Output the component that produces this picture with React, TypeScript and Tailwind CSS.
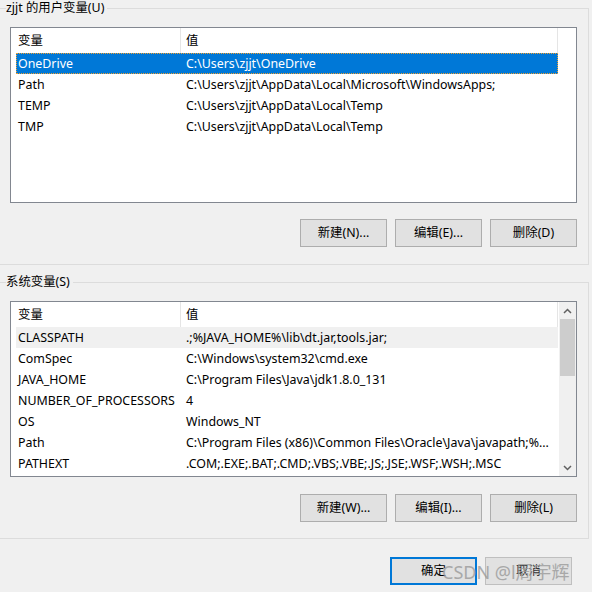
import React from "react";

const FONT = { fontFamily: '"Noto Sans", "Noto Sans CJK SC", sans-serif' };

type Row = [string, string];

const userVars: Row[] = [
  ["OneDrive", "C:\\Users\\zjjt\\OneDrive"],
  ["Path", "C:\\Users\\zjjt\\AppData\\Local\\Microsoft\\WindowsApps;"],
  ["TEMP", "C:\\Users\\zjjt\\AppData\\Local\\Temp"],
  ["TMP", "C:\\Users\\zjjt\\AppData\\Local\\Temp"],
];

const sysVars: Row[] = [
  ["CLASSPATH", ".;%JAVA_HOME%\\lib\\dt.jar,tools.jar;"],
  ["ComSpec", "C:\\Windows\\system32\\cmd.exe"],
  ["JAVA_HOME", "C:\\Program Files\\Java\\jdk1.8.0_131"],
  ["NUMBER_OF_PROCESSORS", "4"],
  ["OS", "Windows_NT"],
  ["Path", "C:\\Program Files (x86)\\Common Files\\Oracle\\Java\\javapath;%..."],
  ["PATHEXT", ".COM;.EXE;.BAT;.CMD;.VBS;.VBE;.JS;.JSE;.WSF;.WSH;.MSC"],
];

function ListView({
  rows,
  selected,
  hover,
  scroll,
}: {
  rows: Row[];
  selected?: number;
  hover?: number;
  scroll?: boolean;
}) {
  return (
    <div className="ml-[10px] w-[567px] h-[176px] border border-[#828790] bg-white flex overflow-hidden">
      <div className="w-[547px] flex flex-col">
        <div className="h-[25px] flex items-stretch shrink-0">
          <div className="w-[169px] pl-[7px] pt-[2px] flex items-center text-[12.4px] leading-none">变量</div>
          <div className="w-px bg-[#e5e5e5]" />
          <div className="flex-1 pl-[5px] pt-[2px] flex items-center text-[12.4px] leading-none border-r border-[#e5e5e5]">值</div>
        </div>
        {rows.map((r, i) => {
          const sel = i === selected;
          const hov = i === hover;
          return (
            <div
              key={i}
              className={
                "ml-[5px] w-[542px] h-[21px] pt-[2px] flex items-center text-[12.4px] leading-none whitespace-nowrap " +
                (sel
                  ? "bg-[#0078d7] text-white outline outline-1 outline-dotted outline-[#f0a030] -outline-offset-1"
                  : hov
                  ? "bg-[#f0f0f0] text-black"
                  : "text-black")
              }
            >
              <div className="w-[170px] pl-[2px]">{r[0]}</div>
              <div className="flex-1">{r[1]}</div>
            </div>
          );
        })}
      </div>
      <div className="flex-1" />
      {scroll && (
        <div className="w-[17px] bg-[#f0f0f0] flex flex-col items-center">
          <div className="h-[17px] w-full flex items-center justify-center">
            <svg width="9" height="6" viewBox="0 0 9 6">
              <path d="M1 5 L4.5 1.5 L8 5" stroke="#606060" strokeWidth="1.5" fill="none" />
            </svg>
          </div>
          <div className="w-[15px] h-[57px] bg-[#cdcdcd]" />
          <div className="flex-1" />
          <div className="h-[17px] w-full flex items-center justify-center">
            <svg width="9" height="6" viewBox="0 0 9 6">
              <path d="M1 1 L4.5 4.5 L8 1" stroke="#606060" strokeWidth="1.5" fill="none" />
            </svg>
          </div>
        </div>
      )}
    </div>
  );
}

function Btn({ label, focus, dim }: { label: string; focus?: boolean; dim?: boolean }) {
  return (
    <div
      className={
        "w-[87px] h-[28px] pt-[1px] flex items-center justify-center text-[12.4px] leading-none bg-[#e1e1e1] " +
        (focus
          ? "border-2 border-[#0078d7]"
          : dim
          ? "border border-[#bfbfbf] text-[#333]"
          : "border border-[#adadad]")
      }
    >
      {label}
    </div>
  );
}

function Group({
  title,
  children,
}: {
  title: string;
  children: React.ReactNode;
}) {
  return (
    <div className="relative w-[589px] border-t border-r border-b border-[#dcdcdc]">
      <div className="absolute left-[6px] -top-[9px] bg-[#f0f0f0] pr-[3px] text-[12.4px] leading-[16px] text-black">
        {title}
      </div>
      {children}
    </div>
  );
}

export default function App() {
  return (
    <div className="relative w-[592px] h-[592px] bg-[#f0f0f0] overflow-hidden text-black" style={FONT}>
      <div className="pt-[8px] flex flex-col">
        <Group title="zjjt 的用户变量(U)">
          <div className="pt-[18px]">
            <ListView rows={userVars} selected={0} />
          </div>
          <div className="flex gap-[8px] ml-[300px] mt-[16px] mb-[17px]">
            <Btn label="新建(N)..." />
            <Btn label="编辑(E)..." />
            <Btn label="删除(D)" />
          </div>
        </Group>
        <div className="h-[17px]" />
        <Group title="系统变量(S)">
          <div className="pt-[18px]">
            <ListView rows={sysVars} hover={0} scroll />
          </div>
          <div className="flex gap-[8px] ml-[300px] mt-[17px] mb-[16px]">
            <Btn label="新建(W)..." />
            <Btn label="编辑(I)..." />
            <Btn label="删除(L)" />
          </div>
        </Group>
        <div className="flex gap-[8px] ml-[390px] mt-[18px]">
          <Btn label="确定" focus />
          <Btn label="取消" dim />
        </div>
      </div>
      <div className="absolute left-[442px] top-[561px] text-[18px] leading-[22px] text-[#9a9a9a] opacity-80 whitespace-nowrap pointer-events-none">
        CSDN @l周宇辉
      </div>
    </div>
  );
}
